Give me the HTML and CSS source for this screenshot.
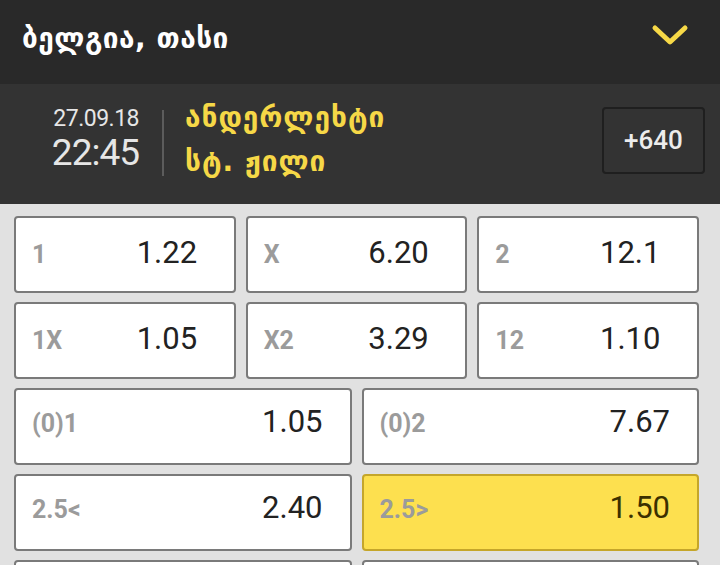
FILE: index.html
```html
<!DOCTYPE html>
<html lang="ka">
<head>
    <meta charset="UTF-8">
    <meta name="viewport" content="width=device-width, initial-scale=1.0">
    <title>ბელგია, თასი</title>
    <link rel="stylesheet" href="styles.css">
</head>
<body>
    <div class="liga">
        <h1 class="liga-titulo">ბელგია, თასი</h1>
        <svg class="seta" width="38" height="24" viewBox="0 0 38 24">
            <polyline points="4,5 19,19 34,5" fill="none" stroke="#f6d847" stroke-width="5" stroke-linecap="round" stroke-linejoin="round"/>
        </svg>
    </div>

    <div class="jogo">
        <div class="jogo-data">
            <span class="data">27.09.18</span>
            <span class="hora">22:45</span>
        </div>
        <div class="divisor"></div>
        <div class="times">
            <span>ანდერლეხტი</span>
            <span>სტ. ჟილი</span>
        </div>
        <button class="mais">+640</button>
    </div>

    <div class="odds">
        <div class="odd tres"><span class="rotulo">1</span><span class="valor">1.22</span></div>
        <div class="odd tres"><span class="rotulo">X</span><span class="valor">6.20</span></div>
        <div class="odd tres"><span class="rotulo">2</span><span class="valor">12.1</span></div>
        <div class="odd tres"><span class="rotulo">1X</span><span class="valor">1.05</span></div>
        <div class="odd tres"><span class="rotulo">X2</span><span class="valor">3.29</span></div>
        <div class="odd tres"><span class="rotulo">12</span><span class="valor">1.10</span></div>
        <div class="odd dois"><span class="rotulo">(0)1</span><span class="valor">1.05</span></div>
        <div class="odd dois"><span class="rotulo">(0)2</span><span class="valor">7.67</span></div>
        <div class="odd dois"><span class="rotulo">2.5&lt;</span><span class="valor">2.40</span></div>
        <div class="odd dois ativo"><span class="rotulo">2.5&gt;</span><span class="valor">1.50</span></div>
        <div class="odd dois"></div>
        <div class="odd dois"></div>
    </div>
</body>
</html>
```

FILE: styles.css
```css
* {
    margin: 0;
    padding: 0;
    box-sizing: border-box;
}
body {
    font-family: Roboto, "DejaVu Sans", sans-serif;
    background-color: #e1e1e1;
    width: 720px;
    height: 565px;
    overflow: hidden;
}
.liga {
    background-color: #292929;
    height: 84px;
    display: flex;
    align-items: center;
    justify-content: space-between;
    padding: 0 31px 10px 22px;
}
.liga-titulo {
    font-family: "DejaVu Sans", sans-serif;
    font-size: 28px;
    font-weight: bold;
    letter-spacing: 0.5px;
    color: #ffffff;
    margin-top: 2px;
}
.seta {
    margin-top: -4px;
}
.jogo {
    background-color: #333333;
    height: 120px;
    display: flex;
    align-items: center;
    padding: 0 15px 8px 0;
}
.jogo-data {
    width: 139px;
    display: flex;
    flex-direction: column;
    align-items: flex-end;
    gap: 3px;
    margin-top: -4px;
    color: #e6e6e6;
}
.data {
    font-size: 23px;
    letter-spacing: -0.5px;
    line-height: 26px;
}
.hora {
    font-size: 37px;
    letter-spacing: -1px;
    line-height: 36px;
}
.divisor {
    width: 2px;
    height: 66px;
    background-color: #5c5c5c;
    margin: 6px 0 0 23px;
}
.times {
    flex: 1;
    display: flex;
    flex-direction: column;
    gap: 12px;
    margin-left: 21px;
    font-family: "DejaVu Sans", sans-serif;
    font-weight: bold;
    font-size: 28px;
    letter-spacing: 1px;
    color: #f6d847;
    line-height: 32px;
}
.mais {
    width: 103px;
    height: 67px;
    background-color: #333333;
    border: 2px solid #1f1f1f;
    border-radius: 4px;
    color: #ececec;
    font-family: Roboto, sans-serif;
    font-size: 26px;
    font-weight: 500;
}
.odds {
    display: grid;
    grid-template-columns: repeat(6, 1fr);
    column-gap: 10px;
    row-gap: 9px;
    padding: 12px 21px 0 14px;
}
.odd {
    height: 77px;
    background-color: #ffffff;
    border: 2px solid #7a7a7a;
    border-radius: 4px;
    display: flex;
    align-items: baseline;
    padding-top: 13px;
}
.odd.tres {
    grid-column: span 2;
    padding-left: 16px;
    padding-top: 16px;
}
.odd.dois {
    grid-column: span 3;
    padding-left: 16px;
    padding-right: 27px;
}
.rotulo {
    font-size: 25px;
    font-weight: bold;
    color: #9b9b9b;
}
.valor {
    font-size: 31px;
    color: #222222;
}
.odd.tres .valor {
    margin-left: auto;
    width: 97px;
}
.odd.dois .valor {
    margin-left: auto;
}
.odd.ativo {
    background-color: #fde04f;
    border-color: #c5a62a;
}
.odd.ativo .valor {
    color: #3b3000;
}
```
